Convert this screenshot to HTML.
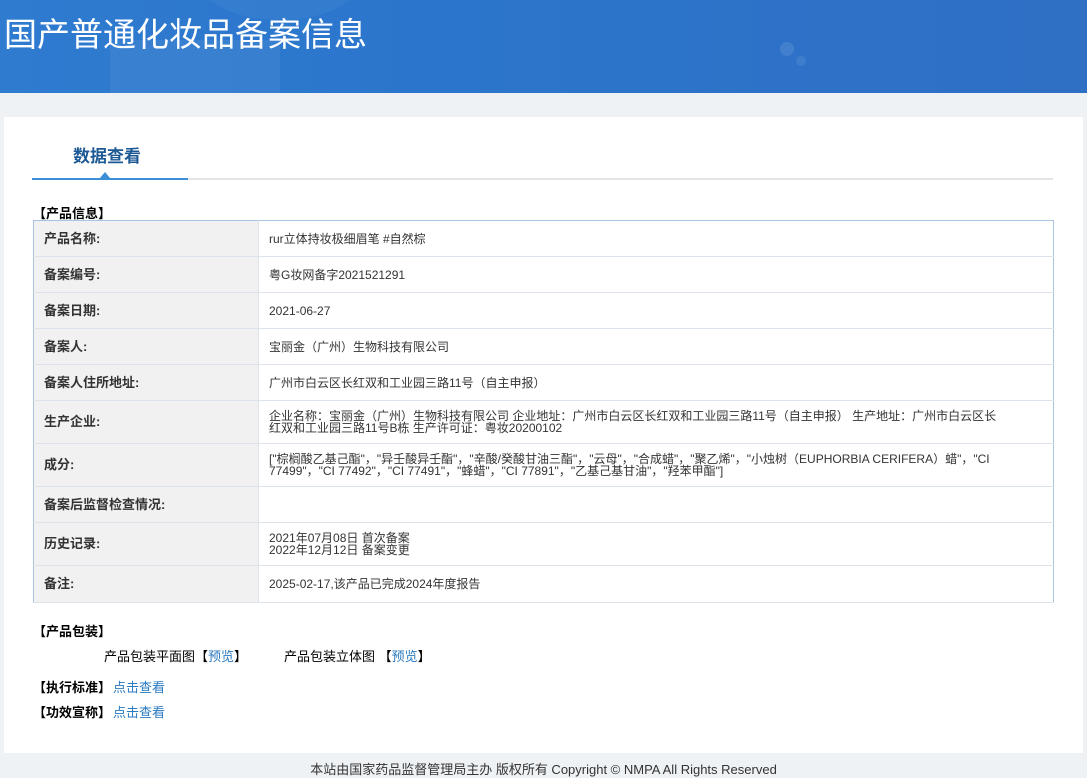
<!DOCTYPE html>
<html><head><meta charset="utf-8"><style>
*{margin:0;padding:0;box-sizing:border-box}
body{width:1087px;height:778px;background:#eef2f5;font-family:"Liberation Sans","Noto Sans CJK SC",sans-serif;position:relative;overflow:hidden;color:#333}
.hdr{position:absolute;left:0;top:0;width:1087px;height:93px;background:linear-gradient(90deg,#2f7bd0 0%,#2b76cc 40%,#2f6fc4 100%);overflow:hidden}
.hdr h1{position:absolute;left:4px;top:8px;font-size:33px;font-weight:normal;color:#fff;font-family:"Noto Sans CJK SC",sans-serif}
.panel{position:absolute;left:4px;top:117px;width:1079px;height:636px;background:#fff}
.tab{position:absolute;left:73px;top:142px;font-size:17px;font-weight:bold;color:#1d5a95}
.line{position:absolute;left:32px;top:178px;width:1021px;height:2px;background:#e4e4e4}
.line2{position:absolute;left:32px;top:178px;width:156px;height:2px;background:#3a8fd6}
.tri{position:absolute;left:100px;top:172px;width:0;height:0;border-left:5px solid transparent;border-right:5px solid transparent;border-bottom:6px solid #3a8fd6}
.sec{position:absolute;font-size:13px;font-weight:bold;color:#000}
table{position:absolute;left:33px;top:220px;width:1021px;border-collapse:collapse;border:1px solid #a9c4e0;font-size:12px}
td{border-bottom:1px solid #dde3ea;padding:0 10px;line-height:12px;vertical-align:middle}
td.l{width:225px;background:#f1f1f1;font-weight:bold;font-size:13px;color:#333;border-right:1px solid #dde3ea}
td.v{color:#333}
a{color:#2a7ac0;text-decoration:none}
.t{position:absolute;font-size:13px;color:#000}
.foot{position:absolute;left:0;top:759px;width:1087px;text-align:center;font-size:13px;color:#333}
</style></head><body>
<div class="hdr">
<div style="position:absolute;left:110px;top:40px;width:170px;height:60px;background:rgba(255,255,255,0.06)"></div>
<div style="position:absolute;left:200px;top:-60px;width:160px;height:80px;border-radius:50%;background:rgba(255,255,255,0.04)"></div>
<div style="position:absolute;left:780px;top:42px;width:14px;height:14px;border-radius:50%;background:rgba(255,255,255,0.1)"></div>
<div style="position:absolute;left:796px;top:56px;width:10px;height:10px;border-radius:50%;background:rgba(255,255,255,0.08)"></div>
<h1>国产普通化妆品备案信息</h1></div>
<div class="panel"></div>
<div class="tab">数据查看</div>
<div class="line"></div><div class="line2"></div><div class="tri"></div>
<div class="sec" style="left:33px;top:203px">【产品信息】</div>
<table>
<tr style="height:36px"><td class="l">产品名称:</td><td class="v">rur立体持妆极细眉笔 #自然棕</td></tr>
<tr style="height:36px"><td class="l">备案编号:</td><td class="v">粤G妆网备字2021521291</td></tr>
<tr style="height:36px"><td class="l">备案日期:</td><td class="v">2021-06-27</td></tr>
<tr style="height:36px"><td class="l">备案人:</td><td class="v">宝丽金（广州）生物科技有限公司</td></tr>
<tr style="height:36px"><td class="l">备案人住所地址:</td><td class="v">广州市白云区长红双和工业园三路11号（自主申报）</td></tr>
<tr style="height:43px"><td class="l">生产企业:</td><td class="v">企业名称：宝丽金（广州）生物科技有限公司 企业地址：广州市白云区长红双和工业园三路11号（自主申报） 生产地址：广州市白云区长<br>红双和工业园三路11号B栋 生产许可证：粤妆20200102</td></tr>
<tr style="height:43px"><td class="l">成分:</td><td class="v">["棕榈酸乙基己酯"，"异壬酸异壬酯"，"辛酸/癸酸甘油三酯"，"云母"，"合成蜡"，"聚乙烯"，"小烛树（EUPHORBIA CERIFERA）蜡"，"CI<br>77499"，"CI 77492"，"CI 77491"，"蜂蜡"，"CI 77891"，"乙基己基甘油"，"羟苯甲酯"]</td></tr>
<tr style="height:36px"><td class="l">备案后监督检查情况:</td><td class="v"></td></tr>
<tr style="height:43px"><td class="l">历史记录:</td><td class="v">2021年07月08日 首次备案<br>2022年12月12日 备案变更</td></tr>
<tr style="height:37px"><td class="l">备注:</td><td class="v">2025-02-17,该产品已完成2024年度报告</td></tr>
</table>
<div class="sec" style="left:33px;top:621px">【产品包装】</div>
<div class="t" style="left:104px;top:646px">产品包装平面图【<a>预览</a>】</div>
<div class="t" style="left:284px;top:646px">产品包装立体图 【<a>预览</a>】</div>
<div class="sec" style="left:33px;top:677px">【执行标准】<a style="font-weight:normal;margin-left:2px">点击查看</a></div>
<div class="sec" style="left:33px;top:702px">【功效宣称】<a style="font-weight:normal;margin-left:2px">点击查看</a></div>
<div class="foot">本站由国家药品监督管理局主办 版权所有 Copyright © NMPA All Rights Reserved</div>
</body></html>
